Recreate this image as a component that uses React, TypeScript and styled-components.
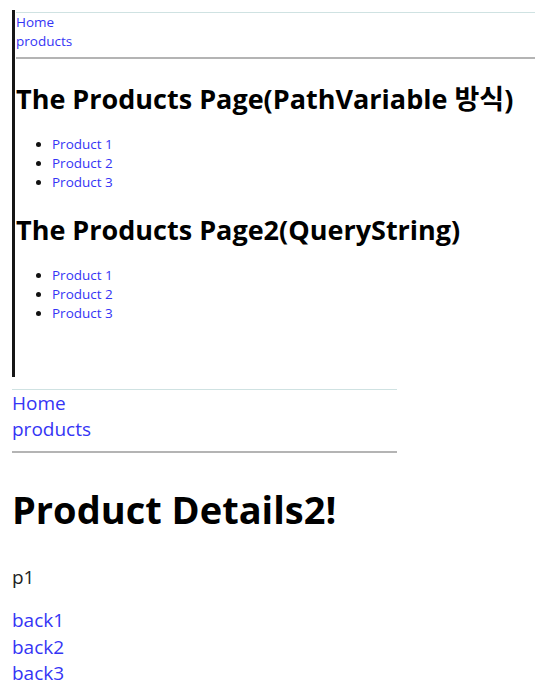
import React from 'react';
import styled, { createGlobalStyle } from 'styled-components';

const GlobalStyle = createGlobalStyle`
  html, body {
    margin: 0;
    padding: 0;
    background: #fff;
  }
  body {
    font-family: "Open Sans", "Noto Sans CJK KR", sans-serif;
    color: #111;
  }
`;

const Page = styled.div`
  padding-top: 10px;
  padding-left: 12px;
`;

const EmbeddedFrame = styled.div`
  border-left: 3px solid #161616;
  padding: 2px 0 54px 1px;
  font-size: 13.5px;
  line-height: 19px;
`;

const Nav = styled.nav<{ $wide?: boolean }>`
  display: flex;
  flex-direction: column;
  border-top: 1px solid #cfe2e2;
  width: ${(p) => (p.$wide ? 'auto' : '385px')};
`;

const NavLink = styled.a`
  color: #3535f5;
  text-decoration: none;
  cursor: pointer;
`;

const Rule = styled.hr<{ $width?: string }>`
  margin: ${(p) => (p.$width ? '9px' : '6px')} 0 0;
  width: ${(p) => p.$width ?? 'auto'};
  border: none;
  border-top: 2px solid #b4b4b4;
  height: 0;
`;

const SectionTitle = styled.h2`
  margin: 22px 0 19px;
  font-size: 27px;
  line-height: 35px;
  font-weight: 700;
  color: #000;
`;

const SecondTitle = styled(SectionTitle)`
  margin-top: 20px;
`;

const ProductList = styled.ul`
  margin: 0;
  padding-left: 36px;
  list-style: disc;
`;

const Item = styled.li`
  line-height: 19px;
`;

const Detail = styled.div`
  padding-top: 2px;
  font-size: 19px;
  line-height: 26px;
`;

const DetailTitle = styled.h1`
  margin: 30px 0 28px;
  font-size: 38px;
  line-height: 53px;
  font-weight: 700;
  color: #000;
`;

const Param = styled.p`
  margin: 0 0 17px;
  color: #222;
`;

const BackLinks = styled.div`
  display: flex;
  flex-direction: column;
  line-height: 26.5px;
`;

const products = ['Product 1', 'Product 2', 'Product 3'];

const App: React.FC = () => {
  return (
    <Page>
      <GlobalStyle />
      <EmbeddedFrame>
        <Nav $wide>
          <NavLink href="#">Home</NavLink>
          <NavLink href="#">products</NavLink>
        </Nav>
        <Rule />
        <SectionTitle>The Products Page(PathVariable 방식)</SectionTitle>
        <ProductList>
          {products.map((p) => (
            <Item key={p}>
              <NavLink href="#">{p}</NavLink>
            </Item>
          ))}
        </ProductList>
        <SecondTitle>The Products Page2(QueryString)</SecondTitle>
        <ProductList>
          {products.map((p) => (
            <Item key={p}>
              <NavLink href="#">{p}</NavLink>
            </Item>
          ))}
        </ProductList>
      </EmbeddedFrame>
      <Detail>
        <Nav style={{ marginTop: 10 }}>
          <NavLink href="#">Home</NavLink>
          <NavLink href="#">products</NavLink>
        </Nav>
        <Rule $width="385px" />
        <DetailTitle>Product Details2!</DetailTitle>
        <Param>p1</Param>
        <BackLinks>
          <NavLink href="#">back1</NavLink>
          <NavLink href="#">back2</NavLink>
          <NavLink href="#">back3</NavLink>
        </BackLinks>
      </Detail>
    </Page>
  );
};

export default App;
